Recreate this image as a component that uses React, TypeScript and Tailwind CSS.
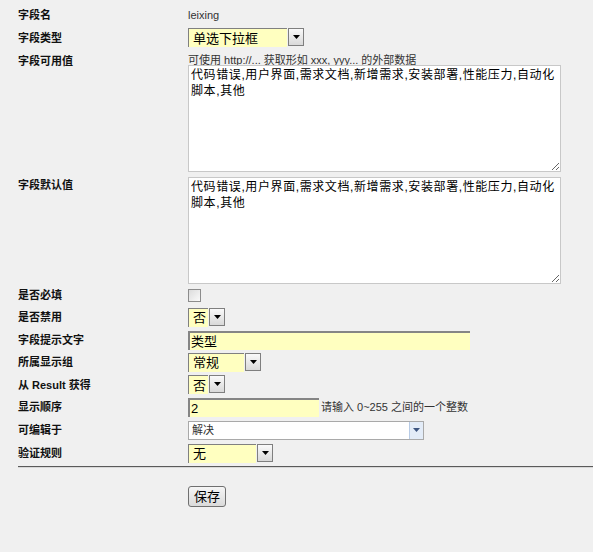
import type { ReactNode } from "react";

const cjk = "font-['Liberation_Sans','Noto_Sans_CJK_SC',sans-serif]";

function Label({ children, top = false }: { children: ReactNode; top?: boolean }) {
  return (
    <div
      className={`w-[188px] shrink-0 pl-[18px] text-[11px] font-bold leading-[14px] text-[#111] ${
        top ? "self-start" : ""
      }`}
    >
      {children}
    </div>
  );
}

// small black arrow button used by the yellow combos
function ArrowButton() {
  return (
    <div className="flex h-[18px] w-[16px] items-center justify-center border border-[#7f7f7f] bg-gradient-to-b from-[#fafafa] to-[#d9d9d9]">
      <svg width="7" height="4" viewBox="0 0 7 4">
        <path d="M0 0h7L3.5 4z" fill="#000" />
      </svg>
    </div>
  );
}

function Combo({ value, width }: { value: string; width: number }) {
  return (
    <div className="flex h-[19px] items-start" style={{ width }}>
      <div className="flex h-[19px] flex-1 items-center border-t border-l border-[#808080] bg-[#ffffc0] pl-[4px] text-[13px] leading-none text-black">
        {value}
      </div>
      <div className="ml-px">
        <ArrowButton />
      </div>
    </div>
  );
}

function YellowInput({ value, width }: { value: string; width: number }) {
  return (
    <div
      className="flex h-[19px] items-center border-t-2 border-l-2 border-[#858585] bg-[#ffffc0] pl-[1px] text-[13px] leading-none text-black"
      style={{ width }}
    >
      {value}
    </div>
  );
}

function Area({ value }: { value: string }) {
  return (
    <textarea
      readOnly
      defaultValue={value}
      className="block h-[107px] w-[373px] resize-y border border-[#c8c8c8] bg-white pt-[1px] pr-[2px] pl-[2px] text-[12px] leading-[16px] tracking-[0.6px] text-black outline-none"
    />
  );
}

export default function App() {
  const choices = "代码错误,用户界面,需求文档,新增需求,安装部署,性能压力,自动化脚本,其他";

  return (
    <div className={`min-h-[552px] w-[593px] bg-[#f0f0f0] ${cjk}`}>
      <div className="flex flex-col pt-[4px]">
        <div className="flex h-[22px] items-center">
          <Label>字段名</Label>
          <span className="text-[11px] text-[#333]">leixing</span>
        </div>

        <div className="flex h-[23px] items-center">
          <Label>字段类型</Label>
          <Combo value="单选下拉框" width={116} />
        </div>

        <div className="flex h-[125px] pt-[5px]">
          <Label top>字段可用值</Label>
          <div className="flex flex-col">
            <span className="h-[11px] text-[11px] leading-[12px] text-[#333]">
              可使用 http://... 获取形如 xxx, yyy... 的外部数据
            </span>
            <Area value={choices} />
          </div>
        </div>

        <div className="flex h-[111px] pt-[3px]">
          <div className="self-start pt-[1px]">
            <Label top>字段默认值</Label>
          </div>
          <Area value={choices} />
        </div>

        <div className="flex h-[20px] items-center">
          <Label>是否必填</Label>
          <div className="h-[13px] w-[13px] border border-[#8c8c8c] bg-gradient-to-br from-[#dcdcdc] to-[#fafafa]" />
        </div>

        <div className="flex h-[24px] items-center">
          <Label>是否禁用</Label>
          <Combo value="否" width={37} />
        </div>

        <div className="flex h-[22px] items-center">
          <Label>字段提示文字</Label>
          <YellowInput value="类型" width={282} />
        </div>

        <div className="flex h-[22px] items-center">
          <Label>所属显示组</Label>
          <Combo value="常规" width={73} />
        </div>

        <div className="flex h-[23px] items-center">
          <Label>从 Result 获得</Label>
          <Combo value="否" width={37} />
        </div>

        <div className="flex h-[22px] items-center">
          <Label>显示顺序</Label>
          <YellowInput value="2" width={131} />
          <span className="ml-[2px] text-[11px] text-[#333]">请输入 0~255 之间的一个整数</span>
        </div>

        <div className="flex h-[24px] items-center">
          <Label>可编辑于</Label>
          <div className="flex h-[19px] w-[236px] border border-[#a9a9a9] bg-white">
            <span className="flex flex-1 items-center pl-[3px] text-[11px] text-[#333]">解决</span>
            <div className="flex w-[14px] items-center justify-center border-l border-[#b7cbe6] bg-[#e3ecf8]">
              <svg width="7" height="4" viewBox="0 0 7 4">
                <path d="M0 0h7L3.5 4z" fill="#3d5580" />
              </svg>
            </div>
          </div>
        </div>

        <div className="flex h-[22px] items-center">
          <Label>验证规则</Label>
          <Combo value="无" width={85} />
        </div>
      </div>

      <div className="ml-[18px] mt-[2px] border-t border-b border-t-[#5a5a5a] border-b-[#d8d8d8]" />

      <div className="pl-[188px] pt-[18px]">
        <button className="flex h-[21px] w-[38px] items-center justify-center rounded-[3px] border border-[#707070] bg-gradient-to-b from-[#f6f6f6] to-[#dadada] text-[13px] leading-none text-black">
          保存
        </button>
      </div>
    </div>
  );
}
